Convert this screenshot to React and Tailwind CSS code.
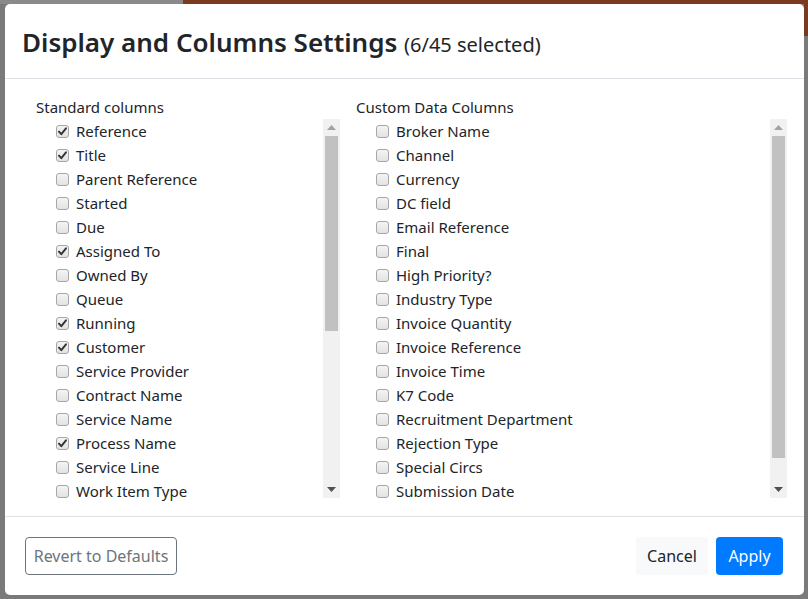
import React from "react";

const left = [
  ["Reference", true],
  ["Title", true],
  ["Parent Reference", false],
  ["Started", false],
  ["Due", false],
  ["Assigned To", true],
  ["Owned By", false],
  ["Queue", false],
  ["Running", true],
  ["Customer", true],
  ["Service Provider", false],
  ["Contract Name", false],
  ["Service Name", false],
  ["Process Name", true],
  ["Service Line", false],
  ["Work Item Type", false],
];

const right = [
  "Broker Name",
  "Channel",
  "Currency",
  "DC field",
  "Email Reference",
  "Final",
  "High Priority?",
  "Industry Type",
  "Invoice Quantity",
  "Invoice Reference",
  "Invoice Time",
  "K7 Code",
  "Recruitment Department",
  "Rejection Type",
  "Special Circs",
  "Submission Date",
];

function Box({ checked }) {
  return (
    <span className="flex h-[13px] w-[13px] shrink-0 items-center justify-center rounded-[3px] border border-[#a6a6a6] bg-gradient-to-b from-[#f4f4f4] to-[#e2e2e2]">
      {checked && (
        <svg width="11" height="11" viewBox="0 0 11 11">
          <path d="M2 5.6 L4.3 8.2 L9 2.3" fill="none" stroke="#333" strokeWidth="1.9" strokeLinecap="round" strokeLinejoin="round" />
        </svg>
      )}
    </span>
  );
}

function Scrollbar({ thumbHeight }) {
  return (
    <div className="flex w-[17px] shrink-0 flex-col bg-[#f1f1f1]">
      <div className="flex h-[17px] items-center justify-center">
        <svg width="9" height="5" viewBox="0 0 9 5"><path d="M0 5 L4.5 0 L9 5 Z" fill="#a3a3a3" /></svg>
      </div>
      <div className="flex-1 px-[2px]">
        <div className="bg-[#c1c1c1]" style={{ height: thumbHeight }} />
      </div>
      <div className="flex h-[17px] items-center justify-center">
        <svg width="9" height="5" viewBox="0 0 9 5"><path d="M0 0 L9 0 L4.5 5 Z" fill="#505050" /></svg>
      </div>
    </div>
  );
}

function Item({ label, checked }) {
  return (
    <div className="flex h-[24px] items-center gap-[7px] pl-[20px]">
      <Box checked={checked} />
      <span className="whitespace-nowrap leading-[18px]">{label}</span>
    </div>
  );
}

export default function App() {
  return (
    <div
      className="relative h-[599px] w-[808px] overflow-hidden bg-[#7a7a7a] text-[#212529]"
      style={{ fontFamily: '"Noto Sans", "Open Sans", sans-serif' }}
    >
      <div className="absolute left-0 top-0 h-[4px] w-[808px] bg-[#7b3a1f]" />
      <div className="absolute left-0 top-0 h-[4px] w-[183px] bg-[#8a8a8a]" />
      <div className="absolute right-0 top-0 h-[36px] w-[4px] bg-[#7b3a1f]" />

      <div className="pl-[5px] pt-[4px]">
        <div className="relative flex h-[591px] w-[799px] flex-col rounded-[5px] bg-white">
          {/* header */}
          <div className="flex h-[75px] shrink-0 items-center border-b border-[#dee2e6] px-[17px] pt-[2px]">
            <h1 className="text-[26px] font-semibold leading-none text-[#212529]">
              Display and Columns Settings{" "}
              <span className="text-[20px] font-normal">(6/45 selected)</span>
            </h1>
          </div>

          {/* body */}
          <div className="flex h-[437px] shrink-0 gap-[16px] pl-[31px] pt-[17px] text-[15px]">
            <div className="flex w-[304px] flex-col">
              <div className="h-[23px] leading-[23px]">Standard columns</div>
              <div className="flex h-[379px]">
                <div className="flex-1">
                  {left.map(([l, c]) => (
                    <Item key={l} label={l} checked={c} />
                  ))}
                </div>
                <Scrollbar thumbHeight={195} />
              </div>
            </div>
            <div className="flex w-[431px] flex-col">
              <div className="h-[23px] leading-[23px]">Custom Data Columns</div>
              <div className="flex h-[379px]">
                <div className="flex-1">
                  {right.map((l) => (
                    <Item key={l} label={l} checked={false} />
                  ))}
                </div>
                <Scrollbar thumbHeight={322} />
              </div>
            </div>
          </div>

          {/* footer */}
          <div className="flex flex-1 items-center justify-between border-t border-[#dee2e6] pl-[20px] pr-[21px] text-[16px]">
            <button className="h-[38px] w-[152px] rounded-[4px] border border-[#6c757d] bg-white text-[#6c757d]">
              Revert to Defaults
            </button>
            <div className="flex gap-[8px]">
              <button className="h-[38px] w-[72px] rounded-[4px] bg-[#f8f9fa] text-[#212529]">Cancel</button>
              <button className="h-[38px] w-[67px] rounded-[4px] bg-[#007bff] text-white">Apply</button>
            </div>
          </div>
        </div>
      </div>
    </div>
  );
}
